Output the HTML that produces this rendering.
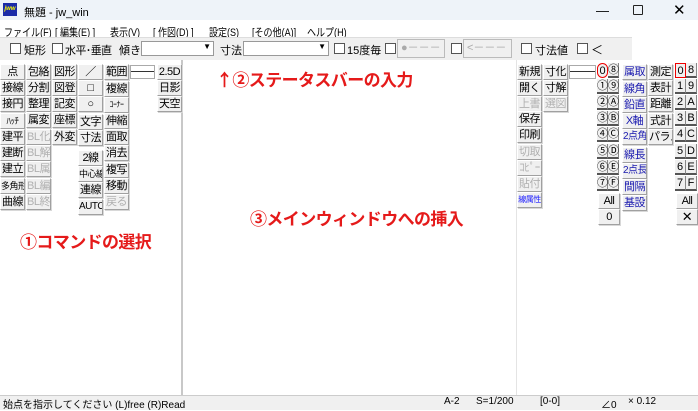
<!DOCTYPE html>
<html><head><meta charset="utf-8"><style>
*{margin:0;padding:0;box-sizing:border-box}
body{width:698px;height:410px;overflow:hidden;background:#fff;font-family:"Liberation Sans","Noto Sans CJK JP",sans-serif;font-size:11px;color:#000;position:relative}
.a{position:absolute;white-space:nowrap}
.b{position:absolute;width:25px;height:16px;background:#f0f0f0;border:1px solid;border-color:#fff #a0a0a0 #a0a0a0 #fff;box-shadow:1px 1px 0 #d8d8d8;text-align:center;line-height:14px;font-size:11px;white-space:nowrap;overflow:hidden;letter-spacing:-0.5px}
.g{color:#b0b0b0}.bl{color:#1a1ab0}
.n{position:absolute;width:11px;height:15px;font-size:11px;text-align:center;line-height:15px;background:#f0f0f0;border-bottom:2px solid #555;border-right:1px solid #888}
.cb{position:absolute;width:11px;height:11px;border:1px solid #555;background:#fff;top:43px}
.red{position:absolute;color:#e51a1a;font-size:17px;font-weight:bold;white-space:nowrap;font-family:"Noto Sans CJK JP",sans-serif;letter-spacing:-0.6px}
.m{position:absolute;top:24px;font-size:11px;white-space:nowrap;transform:scaleX(0.82);transform-origin:0 0}
</style></head><body>
<div class="a" style="left:0;top:0;width:698px;height:20px;background:#eef3f9"></div>
<div class="a" style="left:3px;top:3px;width:14px;height:13px;background:#1b2ba8;color:#ff0;font-size:6px;font-style:italic;font-weight:bold;line-height:13px;text-align:center">jww</div>
<div class="a" style="left:24px;top:4px;font-size:11px">無題 - jw_win</div>
<div class="a" style="left:596px;top:3px;font-size:13px">—</div>
<div class="a" style="left:633px;top:5px;width:10px;height:10px;border:1.5px solid #222;border-radius:1px"></div>
<div class="a" style="left:673px;top:1px;font-size:15px">✕</div>
<div class="m" style="left:4px">ファイル(F)</div>
<div class="m" style="left:55px">[ 編集(E) ]</div>
<div class="m" style="left:110px">表示(V)</div>
<div class="m" style="left:153px">[ 作図(D) ]</div>
<div class="m" style="left:209px">設定(S)</div>
<div class="m" style="left:252px">[その他(A)]</div>
<div class="m" style="left:307px">ヘルプ(H)</div>
<div class="a" style="left:0;top:37px;width:632px;height:23px;background:#f0f0f0;border-top:1px solid #ddd"></div>
<div class="cb" style="left:10px"></div><div class="a" style="left:24px;top:42px">矩形</div>
<div class="cb" style="left:52px"></div><div class="a" style="left:65px;top:42px;letter-spacing:-0.6px">水平･垂直</div>
<div class="a" style="left:119px;top:42px">傾き</div>
<div class="a" style="left:141px;top:41px;width:73px;height:15px;background:#fff;border:1px solid #999"><span style="position:absolute;right:2px;top:0;font-size:8px">▼</span></div>
<div class="a" style="left:220px;top:42px">寸法</div>
<div class="a" style="left:243px;top:41px;width:86px;height:15px;background:#fff;border:1px solid #999"><span style="position:absolute;right:2px;top:0;font-size:8px">▼</span></div>
<div class="cb" style="left:334px"></div><div class="a" style="left:347px;top:42px">15度毎</div>
<div class="cb" style="left:385px"></div>
<div class="a" style="left:397px;top:39px;width:48px;height:19px;border:1px solid #bbb;color:#aaa;line-height:17px;padding-left:3px">●－－－</div>
<div class="cb" style="left:451px"></div>
<div class="a" style="left:463px;top:39px;width:49px;height:19px;border:1px solid #bbb;color:#aaa;line-height:17px;padding-left:3px">&lt;－－－</div>
<div class="cb" style="left:521px"></div><div class="a" style="left:535px;top:42px">寸法値</div>
<div class="cb" style="left:577px"></div><div class="a" style="left:591px;top:41px;font-size:12px">＜</div>
<div class="a" style="left:181px;top:60px;width:2px;height:336px;background:#c8c8c8"></div>
<div class="a" style="left:516px;top:60px;width:1px;height:336px;background:#e4e4e4"></div>
<!-- left buttons -->
<div class="b" style="left:0;top:64px">点</div><div class="b" style="left:0;top:80px">接線</div><div class="b" style="left:0;top:96px">接円</div><div class="b" style="left:0;top:113px;font-size:9px">ﾊｯﾁ</div><div class="b" style="left:0;top:129px">建平</div><div class="b" style="left:0;top:145px">建断</div><div class="b" style="left:0;top:161px">建立</div><div class="b" style="left:0;top:178px;font-size:9px">多角形</div><div class="b" style="left:0;top:194px">曲線</div>
<div class="b" style="left:26px;top:64px">包絡</div><div class="b" style="left:26px;top:80px">分割</div><div class="b" style="left:26px;top:96px">整理</div><div class="b" style="left:26px;top:112px">属変</div><div class="b g" style="left:26px;top:129px">BL化</div><div class="b g" style="left:26px;top:145px">BL解</div><div class="b g" style="left:26px;top:161px">BL属</div><div class="b g" style="left:26px;top:178px">BL編</div><div class="b g" style="left:26px;top:194px">BL終</div>
<div class="b" style="left:52px;top:64px">図形</div><div class="b" style="left:52px;top:80px">図登</div><div class="b" style="left:52px;top:96px">記変</div><div class="b" style="left:52px;top:112px">座標</div><div class="b" style="left:52px;top:129px">外変</div>
<div class="b" style="left:78px;top:64px">／</div><div class="b" style="left:78px;top:80px">□</div><div class="b" style="left:78px;top:96px">○</div><div class="b" style="left:78px;top:114px">文字</div><div class="b" style="left:78px;top:130px">寸法</div><div class="b" style="left:78px;top:150px">2線</div><div class="b" style="left:78px;top:166px;font-size:9px">中心線</div><div class="b" style="left:78px;top:182px">連線</div><div class="b" style="left:78px;top:199px;font-size:10px">AUTO</div>
<div class="b" style="left:104px;top:64px">範囲</div><div class="b" style="left:104px;top:81px">複線</div><div class="b" style="left:104px;top:97px;font-size:8px">ｺｰﾅｰ</div><div class="b" style="left:104px;top:113px">伸縮</div><div class="b" style="left:104px;top:129px">面取</div><div class="b" style="left:104px;top:145px">消去</div><div class="b" style="left:104px;top:162px">複写</div><div class="b" style="left:104px;top:178px">移動</div><div class="b g" style="left:104px;top:194px">戻る</div>
<div class="a" style="left:130px;top:65px;width:25px;height:14px;border:1px solid #aaa;background:#fff"><div style="margin-top:5px;height:1px;background:#333"></div></div>
<div class="b" style="left:157px;top:64px">2.5D</div><div class="b" style="left:157px;top:80px">日影</div><div class="b" style="left:157px;top:96px">天空</div>
<!-- right -->
<div class="b" style="left:517px;top:64px">新規</div><div class="b" style="left:517px;top:80px">開く</div><div class="b g" style="left:517px;top:96px">上書</div><div class="b" style="left:517px;top:111px">保存</div><div class="b" style="left:517px;top:127px">印刷</div><div class="b g" style="left:517px;top:144px">切取</div><div class="b g" style="left:517px;top:160px">ｺﾋﾟｰ</div><div class="b g" style="left:517px;top:176px">貼付</div><div class="b" style="left:517px;top:192px;color:#1a1aff;font-size:8px">線属性</div>
<div class="b" style="left:543px;top:64px">寸化</div><div class="b" style="left:543px;top:80px">寸解</div><div class="b g" style="left:543px;top:96px">選図</div>
<div class="a" style="left:569px;top:65px;width:27px;height:14px;border:1px solid #aaa;background:#fff"><div style="margin-top:5px;height:1px;background:#333"></div></div>
<div class="n" style="left:597px;top:63px;border:1.5px solid #e00;border-radius:6px">0</div><div class="n" style="left:608px;top:63px">⑧</div>
<div class="n" style="left:597px;top:79px">①</div><div class="n" style="left:608px;top:79px">⑨</div>
<div class="n" style="left:597px;top:95px">②</div><div class="n" style="left:608px;top:95px">Ⓐ</div>
<div class="n" style="left:597px;top:111px">③</div><div class="n" style="left:608px;top:111px">Ⓑ</div>
<div class="n" style="left:597px;top:127px">④</div><div class="n" style="left:608px;top:127px">Ⓒ</div>
<div class="n" style="left:597px;top:144px">⑤</div><div class="n" style="left:608px;top:144px">Ⓓ</div>
<div class="n" style="left:597px;top:160px">⑥</div><div class="n" style="left:608px;top:160px">Ⓔ</div>
<div class="n" style="left:597px;top:176px">⑦</div><div class="n" style="left:608px;top:176px">Ⓕ</div>
<div class="b" style="left:598px;top:193px;width:22px">All</div><div class="b" style="left:598px;top:209px;width:22px">0</div>
<div class="b bl" style="left:622px;top:64px">属取</div><div class="b bl" style="left:622px;top:81px">線角</div><div class="b bl" style="left:622px;top:97px">鉛直</div><div class="b bl" style="left:622px;top:113px">X軸</div><div class="b bl" style="left:622px;top:129px;font-size:10px">2点角</div><div class="b bl" style="left:622px;top:147px">線長</div><div class="b bl" style="left:622px;top:163px;font-size:10px">2点長</div><div class="b bl" style="left:622px;top:179px">間隔</div><div class="b bl" style="left:622px;top:195px">基設</div>
<div class="b" style="left:648px;top:64px">測定</div><div class="b" style="left:648px;top:80px">表計</div><div class="b" style="left:648px;top:96px">距離</div><div class="b" style="left:648px;top:113px">式計</div><div class="b" style="left:648px;top:129px">パラメ</div>
<div class="n" style="left:675px;top:63px;border:1.5px solid #e00">0</div><div class="n" style="left:686px;top:63px">8</div>
<div class="n" style="left:675px;top:79px">1</div><div class="n" style="left:686px;top:79px">9</div>
<div class="n" style="left:675px;top:95px">2</div><div class="n" style="left:686px;top:95px">A</div>
<div class="n" style="left:675px;top:111px">3</div><div class="n" style="left:686px;top:111px">B</div>
<div class="n" style="left:675px;top:127px">4</div><div class="n" style="left:686px;top:127px">C</div>
<div class="n" style="left:675px;top:144px">5</div><div class="n" style="left:686px;top:144px">D</div>
<div class="n" style="left:675px;top:160px">6</div><div class="n" style="left:686px;top:160px">E</div>
<div class="n" style="left:675px;top:176px">7</div><div class="n" style="left:686px;top:176px">F</div>
<div class="b" style="left:676px;top:193px;width:22px">All</div><div class="b" style="left:676px;top:209px;width:22px;font-size:13px">✕</div>
<!-- red annotations -->
<div class="red" style="left:216px;top:66px">↑②ステータスバーの入力</div>
<div class="red" style="left:20px;top:228px">①コマンドの選択</div>
<div class="red" style="left:250px;top:205px">③メインウィンドウへの挿入</div>
<!-- status bar -->
<div class="a" style="left:0;top:395px;width:698px;height:15px;background:#f0f0f0;border-top:1px solid #ccc"></div>
<div class="a" style="left:3px;top:396px;font-size:10px">始点を指示してください (L)free (R)Read</div>
<div class="a" style="left:444px;top:396px;font-size:10px">A-2</div>
<div class="a" style="left:476px;top:396px;font-size:10px">S=1/200</div>
<div class="a" style="left:540px;top:396px;font-size:10px">[0-0]</div>
<div class="a" style="left:601px;top:396px;font-size:10px">∠0</div>
<div class="a" style="left:628px;top:396px;font-size:10px">× 0.12</div>
</body></html>
